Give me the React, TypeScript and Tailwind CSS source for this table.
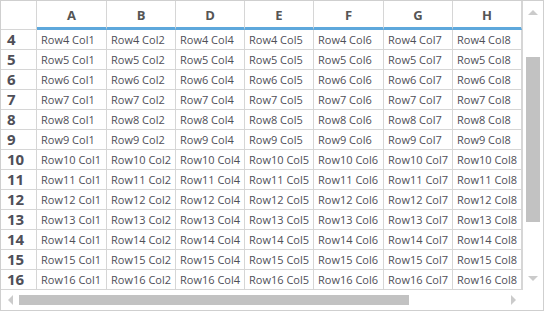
// Grid columns shown in the viewport (C is hidden)
const columns = [
  { key: 'A', col: 1 },
  { key: 'B', col: 2 },
  { key: 'D', col: 4 },
  { key: 'E', col: 5 },
  { key: 'F', col: 6 },
  { key: 'G', col: 7 },
  { key: 'H', col: 8 },
];

const rows = Array.from({ length: 13 }, (_, i) => i + 4);

const gridCols = 'grid grid-cols-[36px_70px_69px_69px_69px_70px_69px_69px]';

const Arrow = ({ dir }: { dir: 'up' | 'down' | 'left' | 'right' }) => {
  const pts = {
    up: '0,5 5,0 10,5',
    down: '0,0 10,0 5,5',
    left: '5,0 5,10 0,5',
    right: '0,0 0,10 5,5',
  }[dir];
  const vertical = dir === 'up' || dir === 'down';
  return (
    <svg width={vertical ? 10 : 5} height={vertical ? 5 : 10} viewBox={vertical ? '0 0 10 5' : '0 0 5 10'}>
      <polygon points={pts} fill="#cbcbcb" />
    </svg>
  );
};

const App = () => {
  return (
    <div className="w-[544px] h-[311px] bg-white border border-[#cfcfcf] flex flex-col font-['Open_Sans',sans-serif] text-[#4f4f58] overflow-hidden">
      <div className="flex h-[289px]">
        <div className="w-[521px]">
          {/* Column headers */}
          <div className={`${gridCols} h-[29px]`}>
            <div className="border-r border-b border-[#d6d6d6]" />
            {columns.map(c => (
              <div
                key={c.key}
                className="border-r border-[#d6d6d6] border-b-[3px] border-b-[#5ea8dc] flex items-center justify-center pt-[3px] font-bold text-[13px] text-[#555]"
              >
                {c.key}
              </div>
            ))}
          </div>

          {/* Data rows */}
          {rows.map(r => (
            <div key={r} className={`${gridCols} h-[20px]`}>
              <div className="border-r border-b border-[#d6d6d6] flex items-center pl-[6px] font-bold text-[15px] text-[#4f4f58] leading-none">
                {r}
              </div>
              {columns.map(c => (
                <div
                  key={c.key}
                  className="border-r border-b border-[#d6d6d6] flex items-center pl-[4px] text-[11px] whitespace-nowrap overflow-hidden leading-none"
                >
                  Row{r} Col{c.col}
                </div>
              ))}
            </div>
          ))}
        </div>

        {/* Vertical scrollbar */}
        <div className="w-[21px] border-l border-[#d6d6d6] flex flex-col items-center">
          <div className="h-[20px] flex items-center justify-center pt-[2px]">
            <Arrow dir="up" />
          </div>
          <div className="flex-1 w-full px-[3px] pt-[36px] pb-[48px]">
            <div className="h-full w-full bg-[#c2c2c2]" />
          </div>
          <div className="h-[20px] flex items-center justify-center pb-[4px]">
            <Arrow dir="down" />
          </div>
        </div>
      </div>

      {/* Horizontal scrollbar */}
      <div className="flex h-[20px]">
        <div className="w-[521px] flex items-center">
          <div className="w-[18px] flex justify-center">
            <Arrow dir="left" />
          </div>
          <div className="flex-1 h-[10px]">
            <div className="h-full w-[390px] bg-[#c2c2c2]" />
          </div>
          <div className="w-[18px] flex justify-center">
            <Arrow dir="right" />
          </div>
        </div>
        <div className="w-[21px]" />
      </div>
    </div>
  );
};

export default App;
